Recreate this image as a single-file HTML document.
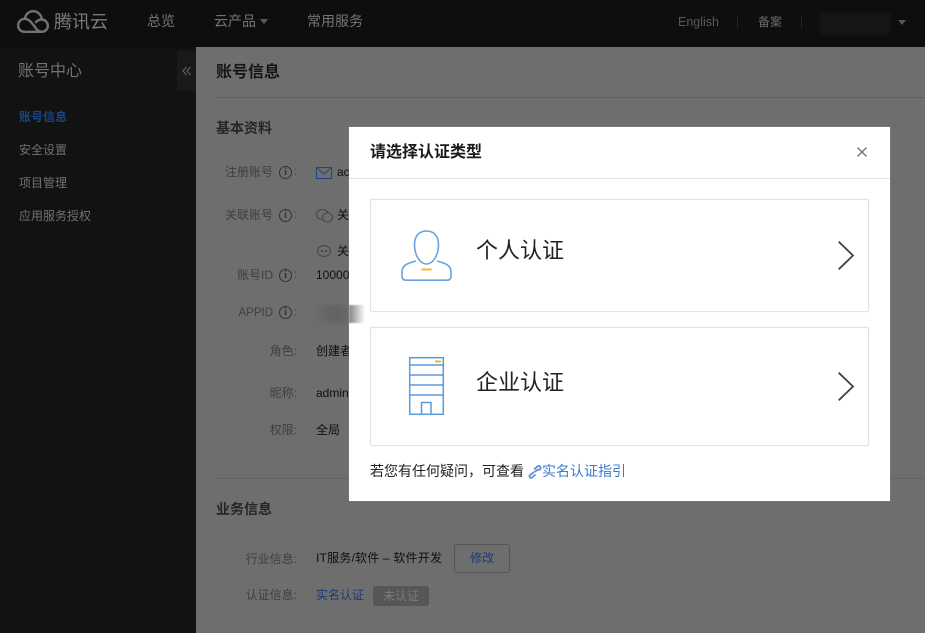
<!DOCTYPE html>
<html lang="zh-CN">
<head>
<meta charset="utf-8">
<title>账号信息</title>
<style>
html,body{margin:0;padding:0}
body{width:925px;height:633px;overflow:hidden;position:relative;background:#6e6e6e;font-family:"Liberation Sans","Noto Sans CJK SC",sans-serif;color:#111}
.a{position:absolute;white-space:nowrap;line-height:20px}
.nav{color:#757575;font-size:14px}
.side{color:#717171;font-size:12px;left:19px}
.lab{color:#3f3f3f;font-size:12px;text-align:right}
.val{color:#0f0f0f;font-size:12px;left:316px}
.h{color:#151515;font-weight:bold}
svg{position:absolute;display:block;overflow:visible}
.i{width:11px;height:11px;border:1.5px solid #333;border-radius:50%;box-sizing:content-box;position:absolute;color:#333;font:bold 10px/11px "Liberation Serif",serif;text-align:center}
.card{position:absolute;left:370px;width:497px;background:#fff;border:1px solid #e3e3e3;border-radius:2px;box-shadow:0 0 1px #e3e3e3}
</style>
</head>
<body>
<div class="a" style="left:0;top:0;width:925px;height:47px;background:#0e0e0e"></div>
<div class="a" style="left:0;top:47px;width:196px;height:586px;background:#121212"></div>
<div class="a" style="left:177px;top:51px;width:19px;height:40px;background:#1a1a1a"></div>
<svg style="left:182px;top:66px" width="10" height="10" viewBox="0 0 10 10" fill="none" stroke="#666" stroke-width="1"><path d="M4.5 1 L1 5 L4.5 9 M8.5 1 L5 5 L8.5 9"/></svg>

<svg style="left:17px;top:10px" width="32" height="23" viewBox="0 0 32 23" fill="none" stroke="#727272" stroke-width="2.4" stroke-linejoin="round" stroke-linecap="round"><path d="M7.5 21.8 C3.5 21.8 1.2 19 1.2 15.5 C1.2 11.5 4.2 8.8 7.8 8.8 C11.5 8.8 14 12 16 14.5 C18.5 17.5 20.5 21.8 24.5 21.8 C28 21.8 30.8 19.5 30.8 15.8 C30.8 12 27.8 9.5 24.5 9.5 C22.5 9.5 20.5 10.5 19 12"/><path d="M7.5 21.8 H24.5"/><path d="M7.8 8.8 C8.8 3.5 12.5 1.2 16.2 1.2 C20.5 1.2 24.3 4.5 25 9.6"/></svg>
<div class="a" style="left:54px;top:10px;font-size:18px;line-height:24px;color:#7a7a7a">腾讯云</div>
<div class="a nav" style="left:147px;top:11px">总览</div>
<div class="a nav" style="left:214px;top:11px">云产品</div>
<div class="a" style="left:260px;top:19px;width:0;height:0;border-left:4px solid transparent;border-right:4px solid transparent;border-top:5px solid #5a5a5a"></div>
<div class="a nav" style="left:307px;top:11px">常用服务</div>
<div class="a" style="left:678px;top:12px;font-size:12.5px;color:#595959">English</div>
<div class="a" style="left:737px;top:15px;width:1px;height:14px;background:#222"></div>
<div class="a" style="left:758px;top:12px;font-size:12px;color:#6a6a6a">备案</div>
<div class="a" style="left:801px;top:15px;width:1px;height:14px;background:#222"></div>
<div class="a" style="left:820px;top:13px;width:70px;height:21px;background:#171717;filter:blur(2px)"></div>
<div class="a" style="left:898px;top:20px;width:0;height:0;border-left:4px solid transparent;border-right:4px solid transparent;border-top:5px solid #555"></div>

<div class="a" style="left:18px;top:62px;font-size:16px;color:#737373">账号中心</div>
<div class="a side" style="top:107px;color:#1c4587;font-weight:bold">账号信息</div>
<div class="a side" style="top:140px">安全设置</div>
<div class="a side" style="top:173px">项目管理</div>
<div class="a side" style="top:206px">应用服务授权</div>

<div class="a h" style="left:216px;top:63px;font-size:16px">账号信息</div>
<div class="a" style="left:216px;top:97px;width:709px;height:1px;background:#5f5f5f"></div>
<div class="a h" style="left:216px;top:118px;font-size:14px;color:#262626">基本资料</div>

<div class="a lab" style="right:652px;top:162px">注册账号</div>
<div class="i" style="left:279px;top:166px">i</div><div class="a lab" style="left:294px;top:161px">:</div>
<svg style="left:316px;top:167px" width="16" height="12" viewBox="0 0 16 12" fill="none" stroke="#1c4587" stroke-width="1"><rect x=".5" y=".5" width="15" height="11"/><path d="M.5 .5 L8 7 L15.5 .5"/></svg>
<div class="a val" style="left:337px;top:162px">ac</div>

<div class="a lab" style="right:652px;top:205px">关联账号</div>
<div class="i" style="left:279px;top:209px">i</div><div class="a lab" style="left:294px;top:204px">:</div>
<svg style="left:316px;top:209px" width="17" height="14" viewBox="0 0 17 14" fill="none" stroke="#444" stroke-width="1"><ellipse cx="6.5" cy="5.5" rx="6" ry="5"/><ellipse cx="11.5" cy="8.5" rx="5" ry="4.5" fill="#6e6e6e"/></svg>
<div class="a val" style="left:337px;top:205px">关</div>

<svg style="left:317px;top:245px" width="14" height="13" viewBox="0 0 14 13" fill="none" stroke="#444" stroke-width="1"><ellipse cx="7" cy="6" rx="6.5" ry="5.5"/><circle cx="5" cy="6" r=".6" fill="#444"/><circle cx="9" cy="6" r=".6" fill="#444"/></svg>
<div class="a val" style="left:337px;top:241px">关</div>

<div class="a lab" style="right:652px;top:265px">账号ID</div>
<div class="i" style="left:279px;top:269px">i</div><div class="a lab" style="left:294px;top:264px">:</div>
<div class="a val" style="top:265px">10000</div>

<div class="a lab" style="right:652px;top:303px;font-size:11.5px">APPID</div>
<div class="i" style="left:279px;top:306px">i</div><div class="a lab" style="left:294px;top:302px">:</div>
<div class="a" style="left:312px;top:305px;width:42px;height:18px;background:linear-gradient(90deg,#6e6e6e,#626262 50%,#6b6b6b);filter:blur(2px)"></div>

<div class="a lab" style="right:628px;top:341px">角色:</div>
<div class="a val" style="top:341px">创建者</div>
<div class="a lab" style="right:628px;top:383px">昵称:</div>
<div class="a val" style="top:383px">admin</div>
<div class="a lab" style="right:628px;top:420px">权限:</div>
<div class="a val" style="top:420px">全局</div>

<div class="a" style="left:216px;top:478px;width:709px;height:1px;background:#636363"></div>
<div class="a h" style="left:216px;top:499px;font-size:14px;color:#262626">业务信息</div>
<div class="a lab" style="right:628px;top:549px">行业信息:</div>
<div class="a val" style="top:548px;letter-spacing:.2px">IT服务/软件 – 软件开发</div>
<div class="a" style="left:454px;top:544px;width:54px;height:27px;border:1px solid #555;border-radius:3px;text-align:center;line-height:27px;font-size:12px;color:#1c3a78">修改</div>
<div class="a lab" style="right:628px;top:585px">认证信息:</div>
<div class="a" style="left:316px;top:585px;font-size:12px;color:#1c3a78">实名认证</div>
<div class="a" style="left:373px;top:586px;width:56px;height:20px;background:#565656;border-radius:3px;text-align:center;font-size:12px;color:#7c7c7c">未认证</div>

<!-- modal -->
<div class="a" style="left:349px;top:127px;width:541px;height:374px;background:#fff;box-shadow:0 0 1px #999"></div>
<div class="a" style="left:349px;top:305px;width:16px;height:18px;background:linear-gradient(90deg,#858585,#fff);filter:blur(.5px)"></div>
<div class="a" style="left:349px;top:178px;width:541px;height:1px;background:#e2e2e2"></div>
<div class="a" style="left:370px;top:143px;font-size:16px;font-weight:bold;color:#1a1a1a">请选择认证类型</div>
<svg style="left:857px;top:147px" width="10" height="10" viewBox="0 0 10 10" stroke="#777" stroke-width="1.4"><path d="M.5 .5 L9.5 9.5 M9.5 .5 L.5 9.5"/></svg>

<div class="card" style="top:199px;height:111px"></div>
<div class="card" style="top:327px;height:117px"></div>

<svg style="left:401px;top:230px" width="51" height="51" viewBox="0 0 51 51" fill="none" stroke="#6aa3dd" stroke-width="1.6"><path d="M13.5 15 C13.5 6 18 1 25.5 1 C33 1 37.5 6 37.5 15 C37.5 25 32 34 25.5 34 C19 34 13.5 25 13.5 15 Z"/><path d="M15 31 C8 33 1 34.5 1 42 V46 C1 49 2.5 50.2 5 50.2 H46 C48.5 50.2 50 49 50 46 V42 C50 34.5 43 33 36 31"/><path d="M20.5 39.5 H30.5" stroke="#f5b52e" stroke-width="2"/></svg>
<div class="a" style="left:476px;top:236px;font-size:22px;line-height:30px;color:#222">个人认证</div>
<svg style="left:838px;top:241px" width="16" height="29" viewBox="0 0 16 29" fill="none" stroke="#3d434c" stroke-width="1.8"><path d="M.7 .7 L15 14.5 L.7 28.3"/></svg>

<svg style="left:409px;top:357px" width="35" height="58" viewBox="0 0 35 58" fill="none" stroke="#5b99dd" stroke-width="1.5"><rect x=".7" y=".7" width="33.6" height="56.6"/><path d="M.7 8 H34.3 M.7 18 H34.3 M.7 28 H34.3 M.7 38 H34.3"/><path d="M12.5 57 V45.5 H22 V57"/><path d="M26 4.5 H32" stroke="#f5b52e" stroke-width="2"/></svg>
<div class="a" style="left:476px;top:368px;font-size:22px;line-height:30px;color:#222">企业认证</div>
<svg style="left:838px;top:372px" width="16" height="29" viewBox="0 0 16 29" fill="none" stroke="#3d434c" stroke-width="1.8"><path d="M.7 .7 L15 14.5 L.7 28.3"/></svg>

<div class="a" style="left:370px;top:461px;font-size:14px;color:#222">若您有任何疑问，可查看</div>
<svg style="left:528px;top:465px" width="14" height="14" viewBox="0 0 14 14" fill="none" stroke="#5b93d8" stroke-width="1.8"><path d="M6 7 L2 10 C.5 11.5 2.5 13.8 4 12.5 L7.5 9.5"/><path d="M6.5 7 L10 4.5 C12 5.5 13.8 3 12.3 1.8 C11 .6 10 .8 9 1.8 L6 4.5"/></svg>
<div class="a" style="left:542px;top:461px;font-size:14px;color:#3d7ad0">实名认证指引</div>
</body>
</html>
